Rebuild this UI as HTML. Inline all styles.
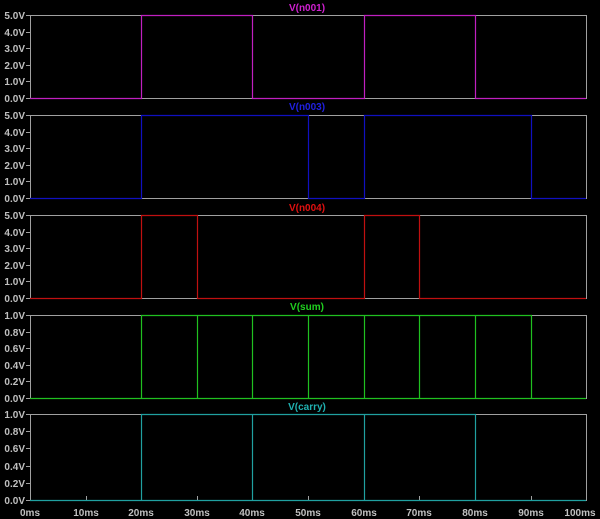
<!DOCTYPE html><html><head><style>body{margin:0;background:#000}svg{display:block}text{font-family:"Liberation Sans",sans-serif;font-weight:bold;font-size:10px}</style></head><body>
<svg width="600" height="519" viewBox="0 0 600 519">
<rect width="600" height="519" fill="#000"/>
<g stroke="#a0a0a0" fill="none" stroke-width="1">
<rect x="30.5" y="15.5" width="556" height="83"/>
<rect x="30.5" y="115.5" width="556" height="83"/>
<rect x="30.5" y="215.5" width="556" height="83"/>
<rect x="30.5" y="315.5" width="556" height="83"/>
<rect x="30.5" y="414.5" width="556" height="86"/>
<path d="M86.5 500v-4M141.5 500v-4M197.5 500v-4M252.5 500v-4M308.5 500v-4M364.5 500v-4M419.5 500v-4M475.5 500v-4M531.5 500v-4"/>
<path d="M26 15.5h4M26 32.5h4M26 48.5h4M26 65.5h4M26 81.5h4M26 98.5h4
M26 115.5h4M26 132.5h4M26 148.5h4M26 165.5h4M26 181.5h4M26 198.5h4
M26 215.5h4M26 232.5h4M26 248.5h4M26 265.5h4M26 281.5h4M26 298.5h4
M26 315.5h4M26 332.5h4M26 348.5h4M26 365.5h4M26 381.5h4M26 398.5h4
M26 414.5h4M26 431.5h4M26 448.5h4M26 466.5h4M26 483.5h4M26 500.5h4"/>
</g>
<g fill="none" stroke-width="1.2">
<path stroke="#c020c0" d="M30 98.5H141.5V15.5H252.5V98.5H364.5V15.5H475.5V98.5H586"/>
<path stroke="#1010c0" d="M30 198.5H141.5V115.5H308.5V198.5H364.5V115.5H531.5V198.5H586"/>
<path stroke="#c01010" d="M30 298.5H141.5V215.5H197.5V298.5H364.5V215.5H419.5V298.5H586"/>
<path stroke="#20c020" d="M30 398.5H141.5V315.5H531.5V398.5H586M141.5 398.5H531.5M197.5 315.5V398.5M252.5 315.5V398.5M308.5 315.5V398.5M364.5 315.5V398.5M419.5 315.5V398.5M475.5 315.5V398.5"/>
<path stroke="#20a0a0" d="M30 500.5H141.5V414.5H475.5V500.5H586M141.5 500.5H475.5M252.5 414.5V500.5M364.5 414.5V500.5"/>
</g>
<g fill="#c0c0c0" text-anchor="end">
<text x="25" y="19">5.0V</text><text x="25" y="36">4.0V</text><text x="25" y="52">3.0V</text><text x="25" y="69">2.0V</text><text x="25" y="85">1.0V</text><text x="25" y="102">0.0V</text>
<text x="25" y="119">5.0V</text><text x="25" y="136">4.0V</text><text x="25" y="152">3.0V</text><text x="25" y="169">2.0V</text><text x="25" y="185">1.0V</text><text x="25" y="202">0.0V</text>
<text x="25" y="219">5.0V</text><text x="25" y="236">4.0V</text><text x="25" y="252">3.0V</text><text x="25" y="269">2.0V</text><text x="25" y="285">1.0V</text><text x="25" y="302">0.0V</text>
<text x="25" y="319">1.0V</text><text x="25" y="336">0.8V</text><text x="25" y="352">0.6V</text><text x="25" y="369">0.4V</text><text x="25" y="385">0.2V</text><text x="25" y="402">0.0V</text>
<text x="25" y="418">1.0V</text><text x="25" y="435">0.8V</text><text x="25" y="452">0.6V</text><text x="25" y="470">0.4V</text><text x="25" y="487">0.2V</text><text x="25" y="504">0.0V</text>
</g>
<g fill="#c0c0c0" text-anchor="middle">
<text x="30" y="516">0ms</text><text x="86" y="516">10ms</text><text x="141" y="516">20ms</text><text x="197" y="516">30ms</text><text x="252" y="516">40ms</text><text x="308" y="516">50ms</text><text x="364" y="516">60ms</text><text x="419" y="516">70ms</text><text x="475" y="516">80ms</text><text x="531" y="516">90ms</text><text x="580" y="516">100ms</text>
<text x="307" y="11" fill="#d020d0">V(n001)</text>
<text x="307" y="110" fill="#2020e0">V(n003)</text>
<text x="307" y="211" fill="#e01010">V(n004)</text>
<text x="307" y="310" fill="#20d020">V(sum)</text>
<text x="307" y="410" fill="#20b0b0">V(carry)</text>
</g>
</svg></body></html>
